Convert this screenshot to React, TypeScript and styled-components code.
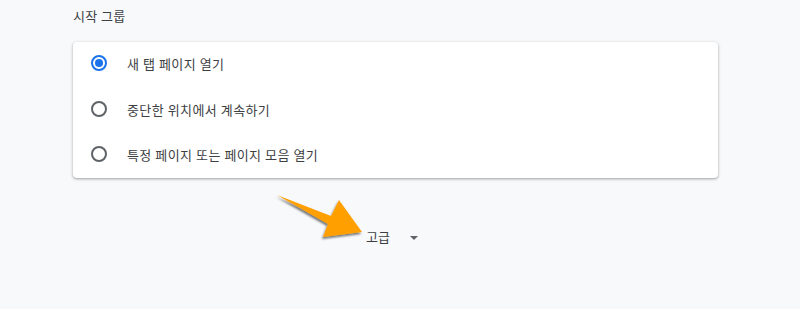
import React, { useState } from "react";
import styled, { createGlobalStyle } from "styled-components";

const GlobalStyle = createGlobalStyle`
  html, body {
    margin: 0;
    padding: 0;
    background: #f8f9fa;
    font-family: Roboto, "Noto Sans CJK KR", sans-serif;
  }
`;

const Page = styled.div`
  position: relative;
  width: 800px;
  height: 309px;
  overflow: hidden;
  padding: 0 82px 0 73px;
  box-sizing: border-box;
`;

const SectionTitle = styled.h2`
  margin: 0;
  padding-top: 6px;
  height: 42px;
  box-sizing: border-box;
  font-size: 13px;
  font-weight: 400;
  color: #3c4043;
  letter-spacing: 0.3px;
`;

const Card = styled.div`
  width: 645px;
  background: #fff;
  border-radius: 4px;
  box-shadow: 0 1px 2px rgba(60, 64, 67, 0.3), 0 1px 3px 1px rgba(60, 64, 67, 0.15);
  display: flex;
  flex-direction: column;

  & > :last-child {
    height: 44px;
  }
`;

const Row = styled.label`
  display: flex;
  align-items: center;
  height: 46px;
  box-sizing: border-box;
  padding: 0 0 4px 18px;
  cursor: pointer;
`;

const Radio = styled.span<{ $checked: boolean }>`
  width: 16px;
  height: 16px;
  box-sizing: border-box;
  border-radius: 50%;
  border: 2px solid ${({ $checked }) => ($checked ? "#1a73e8" : "#5f6368")};
  display: flex;
  align-items: center;
  justify-content: center;
  flex-shrink: 0;

  &::after {
    content: "";
    width: 8px;
    height: 8px;
    border-radius: 50%;
    background: #1a73e8;
    display: ${({ $checked }) => ($checked ? "block" : "none")};
  }
`;

const RowLabel = styled.span`
  margin-left: 20px;
  font-size: 13px;
  color: #3c4043;
  letter-spacing: 0.4px;
`;

const Footer = styled.div`
  width: 645px;
  display: flex;
  justify-content: center;
  padding-top: 45px;
`;

const AdvancedButton = styled.button`
  display: flex;
  align-items: center;
  gap: 20px;
  background: none;
  border: none;
  padding: 4px 7px 4px 0;
  font-family: inherit;
  font-size: 13px;
  color: #3c4043;
  cursor: pointer;
`;

const Caret = styled.span`
  width: 0;
  height: 0;
  border-left: 4px solid transparent;
  border-right: 4px solid transparent;
  border-top: 4px solid #5f6368;
  margin-top: 2px;
`;

const Pointer = styled.svg`
  position: absolute;
  left: 0;
  top: 0;
  pointer-events: none;
`;

const options = [
  "새 탭 페이지 열기",
  "중단한 위치에서 계속하기",
  "특정 페이지 또는 페이지 모음 열기",
];

export default function App() {
  const [selected, setSelected] = useState(0);

  return (
    <>
      <GlobalStyle />
      <Page>
        <SectionTitle>시작 그룹</SectionTitle>
        <Card>
          {options.map((text, i) => (
            <Row key={text} onClick={() => setSelected(i)}>
              <Radio $checked={selected === i} />
              <RowLabel>{text}</RowLabel>
            </Row>
          ))}
        </Card>
        <Footer>
          <AdvancedButton>
            고급
            <Caret />
          </AdvancedButton>
        </Footer>
        <Pointer width="800" height="309" viewBox="0 0 800 309">
          <defs>
            <filter id="sh" x="-20%" y="-20%" width="140%" height="140%">
              <feDropShadow dx="-1" dy="2" stdDeviation="1" floodColor="#000" floodOpacity="0.55" />
            </filter>
          </defs>
          <polygon
            points="277,195 331,216 339,200 362,232 323,237 328,224"
            fill="#ff9f00"
            filter="url(#sh)"
          />
        </Pointer>
      </Page>
    </>
  );
}
